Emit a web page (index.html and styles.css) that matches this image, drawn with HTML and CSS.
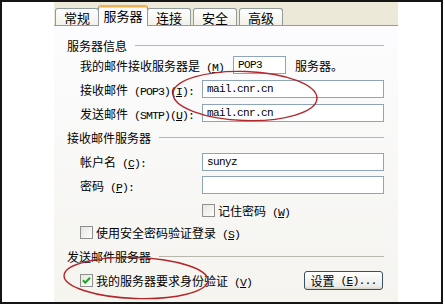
FILE: index.html
```html
<!DOCTYPE html>
<html lang="zh-CN">
<head>
<meta charset="utf-8">
<title>服务器</title>
<link rel="stylesheet" href="styles.css">
</head>
<body>
<div class="frame">
  <div class="gutter-left"></div>
  <div class="dialog">
    <div class="tabs">
      <div class="tab">常规</div>
      <div class="tab active">服务器</div>
      <div class="tab">连接</div>
      <div class="tab">安全</div>
      <div class="tab">高级</div>
    </div>
    <div class="panel">
      <div class="section t1"><span>服务器信息</span><i class="rule"></i></div>
      <div class="row r-m">
        <span class="label">我的邮件接收服务器是<span class="lat"> (<u>M</u>)</span></span>
        <span class="input small">POP3</span>
        <span class="after">服务器。</span>
      </div>
      <div class="row r-pop">
        <span class="label wide">接收邮件<span class="lat"> (POP3)(<u>I</u>):</span></span>
        <span class="input">mail.cnr.cn</span>
      </div>
      <div class="row r-smtp">
        <span class="label wide">发送邮件<span class="lat"> (SMTP)(<u>U</u>):</span></span>
        <span class="input">mail.cnr.cn</span>
      </div>
      <div class="section t2"><span>接收邮件服务器</span><i class="rule"></i></div>
      <div class="row r-c">
        <span class="label wide">帐户名<span class="lat"> (<u>C</u>):</span></span>
        <span class="input">sunyz</span>
      </div>
      <div class="row r-p">
        <span class="label wide">密码<span class="lat"> (<u>P</u>):</span></span>
        <span class="input"></span>
      </div>
      <div class="row r-w">
        <span class="check"></span>
        <span class="ctext">记住密码<span class="lat"> (<u>W</u>)</span></span>
      </div>
      <div class="row r-s">
        <span class="check"></span>
        <span class="ctext">使用安全密码验证登录<span class="lat"> (<u>S</u>)</span></span>
      </div>
      <div class="section t3"><span>发送邮件服务器</span><i class="rule"></i></div>
      <div class="row r-v">
        <span class="check checked"><svg viewBox="0 0 11 11" width="11" height="11"><path d="M2 5.2 L4.3 7.6 L9 2.8" fill="none" stroke="#21a121" stroke-width="2"/></svg></span>
        <span class="ctext grow">我的服务器要求身份验证<span class="lat"> (<u>V</u>)</span></span>
        <span class="button">设置<span class="lat"> (<u>E</u>)...</span></span>
      </div>
    </div>
  </div>
  <div class="gutter-right"></div>
  <svg class="marks" width="445" height="305" viewBox="0 0 445 305">
    <ellipse cx="245" cy="96" rx="72" ry="24.5" transform="rotate(2 245 96)" fill="none" stroke="#b4262a" stroke-width="1.4"/>
    <ellipse cx="136" cy="278" rx="72" ry="20.5" transform="rotate(2 136 278)" fill="none" stroke="#b4262a" stroke-width="1.4"/>
  </svg>
</div>
</body>
</html>
```
FILE: styles.css
```css
* { box-sizing: border-box; }
html, body { margin: 0; padding: 0; background: #fff; }
body { width: 445px; height: 305px; overflow: hidden; font-family: "Noto Sans CJK SC", "Liberation Sans", sans-serif; font-size: 12px; color: #000; }
u { text-decoration: underline; text-underline-offset: 1px; }
.lat { font-family: "Liberation Mono", monospace; font-size: 11.5px; letter-spacing: -0.9px; white-space: pre; }

.frame { position: relative; width: 443px; height: 304px; border: 2px solid #151515; display: flex; background: #fff; }
.gutter-left { width: 52px; flex: none; }
.gutter-right { flex: 1; }
.dialog { width: 344px; flex: none; display: flex; flex-direction: column; }

.tabs { height: 24px; flex: none; background: #ece9d8; border-bottom: 1px solid #919b9c; display: flex; align-items: flex-end; padding-left: 1px; gap: 2px; }
.tab { width: 44px; height: 17px; border: 1px solid #919b9c; border-bottom: none; border-radius: 3px 3px 0 0; background: linear-gradient(#fefefe, #f2f1ea); display: flex; justify-content: center; align-items: center; font-size: 13px; line-height: 1; padding-top: 1px; }
.tab.active { width: 50px; height: 21px; margin: 0 -3px -1px; border-top: 2px solid #f6b04a; background: #fcfcfe; z-index: 1; padding-bottom: 3px; box-shadow: inset 0 1px 0 #ffd785; }

.panel { flex: 1; background: linear-gradient(#fcfcfe, #f5f4ef); padding: 11px 14px 0 13px; display: flex; flex-direction: column; }

.section { height: 16px; display: flex; align-items: center; gap: 8px; font-size: 12px; }
.section .rule { flex: 1; height: 1px; background: #b8b7ac; }
.t2 { margin-top: 4px; }
.t3 { margin-top: 5px; }

.row { height: 24px; display: flex; align-items: center; padding-left: 13px; }
.label { white-space: nowrap; }
.label.wide { width: 122px; flex: none; }
.input { height: 18px; flex: 1; border: 1px solid #8ea4b8; background: #fff; font-family: "Liberation Mono", monospace; font-size: 11px; letter-spacing: -0.6px; line-height: 16px; padding-left: 4px; }
.input.small { flex: none; width: 53px; margin-left: 9px; }
.after { margin-left: 9px; }
.r-c { margin-top: 5px; height: 23px; }
.r-w { height: 22px; margin-top: 2px; padding-left: 135px; }
.r-s { height: 22px; }
.r-v { margin-top: 4px; }

.check { width: 13px; height: 13px; flex: none; border: 1px solid #8f8f8f; background: linear-gradient(135deg, #e6e6e0, #fdfdfb); margin-right: 3px; display: flex; align-items: center; justify-content: center; }
.check svg { display: block; }
.ctext { white-space: nowrap; }
.grow { flex: 1; }
.button { width: 79px; height: 19px; margin-right: 1px; border: 1px solid #3a4e66; border-radius: 3px; background: linear-gradient(#ffffff, #ecebe6 85%, #d8d5c8); display: flex; align-items: center; justify-content: center; }

.marks { position: absolute; left: -2px; top: -2px; pointer-events: none; }
```
